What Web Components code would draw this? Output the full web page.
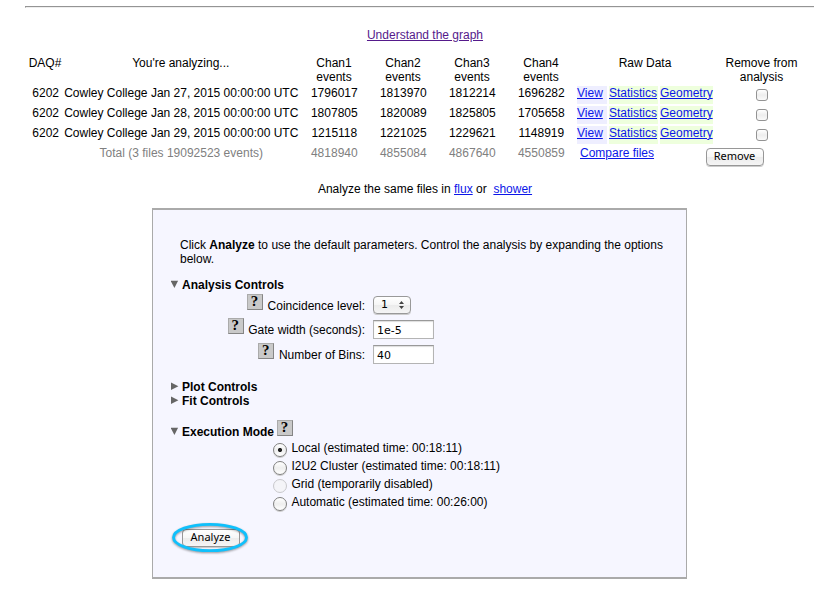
<!DOCTYPE html>
<html lang="en">
<head>
<meta charset="utf-8">
<title>Shower analysis</title>
<style>
html { background: #fff; }
body { margin: 0; font: 12px/14px "Liberation Sans", Arial, sans-serif; color: #000; }
</style>
</head>
<body>
<analysis-page></analysis-page>
<script>
const define = (name, html) => customElements.define(name, class extends HTMLElement {
  connectedCallback() {
    if (this.shadowRoot) return;
    const root = this.attachShadow({ mode: 'open' });
    const t = document.createElement('template');
    t.innerHTML = typeof html === 'function' ? html(this) : html;
    root.append(t.content.cloneNode(true));
  }
});

define('text-link', el => `<style>
:host { display: inline; }
a { color: ${el.hasAttribute('visited') ? '#551a8b' : '#0b16e8'}; text-decoration: underline; text-underline-offset: 1px; text-decoration-thickness: 1px; }
</style><a href="#"><slot></slot></a>`);

define('push-button', `
<style>
:host { display: inline-block; }
button { display: block; box-sizing: border-box; width: 58px; height: 18px; padding: 0 0 2px; border: 1px solid #979797; border-radius: 4px;
  background: linear-gradient(#fff 0%, #f6f6f6 50%, #ececec 51%, #f5f5f5 100%); box-shadow: 0 1px 0 #ccc;
  font: 11px/14px "Noto Sans", sans-serif; color: #000; text-align: center; white-space: nowrap; }
</style><button><slot></slot></button>`);

define('check-box', `
<style>
:host { display: block; width: 12px; height: 12px; }
input { appearance: none; display: block; box-sizing: border-box; margin: 0; width: 12px; height: 12px; border: 1px solid #939393; border-radius: 3px; background: linear-gradient(#fff, #eee 50%, #fafafa); }
</style><input type="checkbox" aria-label="Remove from analysis">`);

define('help-icon', `
<style>
:host { display: block; width: 16px; height: 16px; flex: none; }
span { display: block; box-sizing: border-box; width: 16px; height: 16px; background: #c9c9c9; border: 1px solid; border-color: #ababab #858585 #858585 #ababab;
 font: bold 15px/13px "Liberation Serif", serif; text-align: center; color: #000; padding-right: 1px; }
</style><span>?</span>`);

define('data-row', el => {
  const [name, ...chans] = el.dataset.cells.split('|');
  const total = el.hasAttribute('total');
  return `
<style>
:host { display: grid; grid-template-columns: 34px 237.5px repeat(4, 69px) 140px 93px; height: 18px; ${total ? 'color:#808080;' : ''} }
.id { text-align: right; padding-right: 3px; }
.c { text-align: center; white-space: nowrap; }
.name { padding-left: 1px; }
.chan { padding-left: .6px; }
.raw { display: flex; gap: 2px; padding-left: 1.5px; white-space: nowrap; }
.raw span { box-sizing: border-box; height: 18px; }
.v { width: 30px; background: #eeeeff; }
.s { width: 49px; background: #eeffdd; }
.g { width: 53px; background: #eeffdd; }
.cmp { padding-left: 3px; }
.rm { display: flex; justify-content: center; padding-top: 3px; }
.rm.total { justify-content: flex-start; margin-left: -10px; padding-top: 2px; }
</style>
<div class="id">${total ? '' : '6202'}</div><div class="c name">${name}</div>
${chans.map(c => `<div class="c chan">${c}</div>`).join('')}
<div class="raw">${total
  ? '<span class="cmp"><text-link>Compare files</text-link></span>'
  : '<span class="v"><text-link>View</text-link></span><span class="s"><text-link>Statistics</text-link></span><span class="g"><text-link>Geometry</text-link></span>'}</div>
<div class="rm ${total ? 'total' : ''}">${total ? '<push-button>Remove</push-button>' : '<check-box></check-box>'}</div>`;
});

define('data-table', `
<style>
:host { display: grid; row-gap: 2px; padding-left: 28px; }
.head { display: grid; grid-template-columns: 34px 237.5px repeat(4, 69px) 139px 94px; height: 28px; text-align: center; }
</style>
<div class="head"><div>DAQ#</div><div>You're analyzing...</div><div>Chan1<br>events</div><div>Chan2<br>events</div><div>Chan3<br>events</div><div>Chan4<br>events</div><div>Raw Data</div><div>Remove from<br>analysis</div></div>
<data-row data-cells="Cowley College Jan 27, 2015 00:00:00 UTC|1796017|1813970|1812214|1696282"></data-row>
<data-row data-cells="Cowley College Jan 28, 2015 00:00:00 UTC|1807805|1820089|1825805|1705658"></data-row>
<data-row data-cells="Cowley College Jan 29, 2015 00:00:00 UTC|1215118|1221025|1229621|1148919"></data-row>
<data-row total data-cells="Total (3 files 19092523 events)|4818940|4855084|4867640|4550859"></data-row>`);

define('section-title', el => `
<style>
:host { display: flex; height: 14px; font-weight: bold; gap: 3px; white-space: nowrap; }
svg { width: 8px; height: 8px; margin-top: 2px; flex: none; }
::slotted(help-icon) { margin: -5px 0 0 0; }
</style>
<svg viewBox="0 0 8 8"><path fill="#666" d="${el.hasAttribute('open') ? 'M-.3 .8h7.4L3.4 8z' : 'M0 .6v7.4L7.4 4.3z'}"/></svg>
<span><slot></slot></span><slot name="help"></slot>`);

define('field-row', `
<style>
:host { display: grid; grid-template-columns: 194px 1fr; column-gap: 8px; align-items: start; }
.l { display: flex; justify-content: flex-end; gap: 4.6px; white-space: nowrap; }
.t { padding-top: 5px; }
.f { padding-top: 2px; }
</style><div class="l"><help-icon></help-icon><span class="t"><slot></slot></span></div><div class="f"><slot name="field"></slot></div>`);

define('text-field', el => `
<style>
:host { display: block; }
input { display: block; box-sizing: border-box; width: 61px; height: 19px; margin: 0; padding: 1px 3px 0; border: 1px solid #b4b4b4; border-top-color: #999; border-radius: 0; background: #fff; box-shadow: inset 0 1px 1px #ddd; font: 11px/15px "DejaVu Sans", sans-serif; color: #000; outline: 0; }
</style><input type="text" value="${el.dataset.value}">`);

define('level-select', `
<style>
:host { display: block; }
.s { display: flex; align-items: center; justify-content: space-between; box-sizing: border-box; width: 38px; height: 18px; padding: 0 6px 0 7px; border: 1px solid #999; border-radius: 4px; background: linear-gradient(#fff, #f5f5f5 50%, #ebebeb 51%, #f5f5f5); box-shadow: 0 1px 0 #ccc; font: 11px/16px "DejaVu Sans", sans-serif; }
svg { width: 5px; height: 8px; }
</style><div class="s"><span>1</span><svg viewBox="0 0 5 8"><path fill="#444" d="M0 3 2.5 0 5 3zM0 5h5L2.5 8z"/></svg></div>`);

define('radio-option', el => `
<style>
:host { display: flex; height: 18px; gap: 4.4px; white-space: nowrap; }
input { appearance: none; flex: none; box-sizing: border-box; width: 14px; height: 14px; margin: 2px 0 0; border: 1px solid #808080; border-radius: 50%; background: linear-gradient(#fff, #eee 50%, #fff); box-shadow: 0 1px 0 #ccc; }
input:checked { background: radial-gradient(circle, #222 0 1.7px, transparent 2.4px), linear-gradient(#fff, #eee 50%, #fff); }
input:disabled { border-color: #c8c8cc; background: #f4f4f8; box-shadow: none; }
</style><input type="radio" ${el.hasAttribute('checked') ? 'checked' : ''} ${el.hasAttribute('off') ? 'disabled' : ''}><span><slot></slot></span>`);

define('ring-highlight', `
<style>
:host { display: block; position: relative; width: 58px; }
svg { position: absolute; left: -12px; top: -8px; width: 82px; height: 36px; overflow: visible; pointer-events: none; filter: drop-shadow(0 1.5px 1px rgba(0,0,0,.4)); }
</style><slot></slot><svg viewBox="0 0 82 36"><ellipse cx="40" cy="16.5" rx="36.5" ry="13.2" fill="none" stroke="#0fc0fc" stroke-width="2.8"/></svg>`);

define('control-panel', `
<style>
:host { display: flex; flex-direction: column; box-sizing: border-box; width: 535px; height: 371px; margin-left: 152px; padding: 28px 18px 0 18px; border: 1px solid #aaa; border-width: 2px 1px 2px 1px; background: #f6f6ff; }
p { margin: 0 0 12px 9px; width: 490px; }
.fields { display: grid; grid-template-rows: 24px 25px 37px; margin-top: 2px; }
.exec { margin-top: 17px; }
.radios { margin: 2px 0 0 102px; }
ring-highlight { margin: 16px 0 0 10.5px; }
</style>
<p>Click <b>Analyze</b> to use the default parameters. Control the analysis by expanding the options below.</p>
<section-title open>Analysis Controls</section-title>
<div class="fields">
<field-row>Coincidence level:<level-select slot="field"></level-select></field-row>
<field-row>Gate width (seconds):<text-field slot="field" data-value="1e-5"></text-field></field-row>
<field-row>Number of Bins:<text-field slot="field" data-value="40"></text-field></field-row>
</div>
<section-title>Plot Controls</section-title>
<section-title>Fit Controls</section-title>
<section-title open class="exec">Execution Mode<help-icon slot="help"></help-icon></section-title>
<div class="radios">
<radio-option checked>Local (estimated time: 00:18:11)</radio-option>
<radio-option>I2U2 Cluster (estimated time: 00:18:11)</radio-option>
<radio-option off>Grid (temporarily disabled)</radio-option>
<radio-option>Automatic (estimated time: 00:26:00)</radio-option>
</div>
<ring-highlight><push-button>Analyze</push-button></ring-highlight>`);

define('analysis-page', `
<style>
:host { display: flex; flex-direction: column; width: 828px; height: 603px; overflow: hidden; background: #fff; }
.rule { margin: 6px 14px 0 25px; height: 2px; box-sizing: border-box; border-top: 1px solid #949494; border-left: 1px solid #949494; border-bottom: 1px solid #eee; }
.center { text-align: center; padding-left: 22px; }
.guide { margin-top: 20px; }
data-table { margin-top: 14px; }
.same { margin: 18px 0 12px; }
</style>
<div class="rule"></div>
<div class="center guide"><text-link visited>Understand the graph</text-link></div>
<data-table></data-table>
<div class="center same">Analyze the same files in <text-link>flux</text-link> or&nbsp; <text-link>shower</text-link></div>
<control-panel></control-panel>
`);
</script>
</body>
</html>
